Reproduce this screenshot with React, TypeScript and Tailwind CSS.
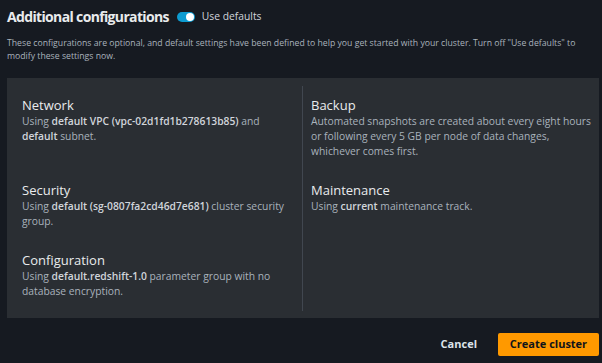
import React from "react";

type Item = {
  title: string;
  body: React.ReactNode;
};

const left: Item[] = [
  {
    title: "Network",
    body: (
      <>
        Using <b>default VPC (vpc-02d1fd1b278613b85)</b> and <b>default</b> subnet.
      </>
    ),
  },
  {
    title: "Security",
    body: (
      <>
        Using <b>default (sg-0807fa2cd46d7e681)</b> cluster security group.
      </>
    ),
  },
  {
    title: "Configuration",
    body: (
      <>
        Using <b>default.redshift-1.0</b> parameter group with no database encryption.
      </>
    ),
  },
];

const right: (Item | null)[] = [
  {
    title: "Backup",
    body: (
      <>
        Automated snapshots are created about every eight hours or following every 5 GB per node
        of data changes, whichever comes first.
      </>
    ),
  },
  {
    title: "Maintenance",
    body: (
      <>
        Using <b>current</b> maintenance track.
      </>
    ),
  },
  null,
];

function Cell({ item }: { item: Item | null }) {
  if (!item) return <div />;
  return (
    <div>
      <div className="text-[13px] leading-[18px] text-[#e9ebed]">{item.title}</div>
      <p className="text-[10.3px] leading-[15px] text-[#a9b2bc] [&_b]:font-semibold [&_b]:text-[#d1d5db]">
        {item.body}
      </p>
    </div>
  );
}

export default function App() {
  return (
    <div
      className="h-[363px] w-[602px] overflow-hidden bg-[#161a21] pt-[5px]"
      style={{ fontFamily: '"Open Sans", "Noto Sans", sans-serif' }}
    >
      <div className="flex items-center px-[7px]">
        <h2 className="text-[14px] font-bold leading-[24px] tracking-[-0.65px] text-[#e9ebed]">
          Additional configurations
        </h2>
        <span className="ml-[8px] flex h-[10px] w-[18px] items-center justify-end rounded-full bg-[#0d9bd0] pr-[1px]">
          <span className="h-[8px] w-[8px] rounded-full bg-white" />
        </span>
        <span className="ml-[7px] text-[10.3px] text-[#d1d5db]">Use defaults</span>
      </div>

      <p className="mt-[8px] px-[7px] text-[8.7px] leading-[13px] text-[#a9b2bc]">
        These configurations are optional, and default settings have been defined to help you get
        started with your cluster. Turn off "Use defaults" to modify these settings now.
      </p>

      {/* summary panel */}
      <div className="ml-[7px] mr-[3px] mt-[15px] bg-[#2a2e33] pb-[7px] pl-[15px] pr-[6px] pt-[8px]">
        <div className="grid grid-cols-[280px_1fr]">
          {left.map((item, i) => (
            <React.Fragment key={item.title}>
              <div className={`pr-[12px] ${i === 0 ? "pt-[10px]" : "pt-[22px]"} ${i === 2 ? "pb-[12px]" : ""}`}>
                <Cell item={item} />
              </div>
              <div className={`border-l border-[#414750] pl-[8px] ${i === 0 ? "pt-[10px]" : "pt-[22px]"}`}>
                <Cell item={right[i]} />
              </div>
            </React.Fragment>
          ))}
        </div>
      </div>

      <div className="mt-[15px] flex items-center justify-end gap-[21px] pr-[3px]">
        <button className="text-[11px] font-bold text-[#dde3ea]">Cancel</button>
        <button className="h-[23px] w-[101px] rounded-[2px] bg-[#ff9900] text-[11px] font-bold text-[#0f141a]">
          Create cluster
        </button>
      </div>
    </div>
  );
}
